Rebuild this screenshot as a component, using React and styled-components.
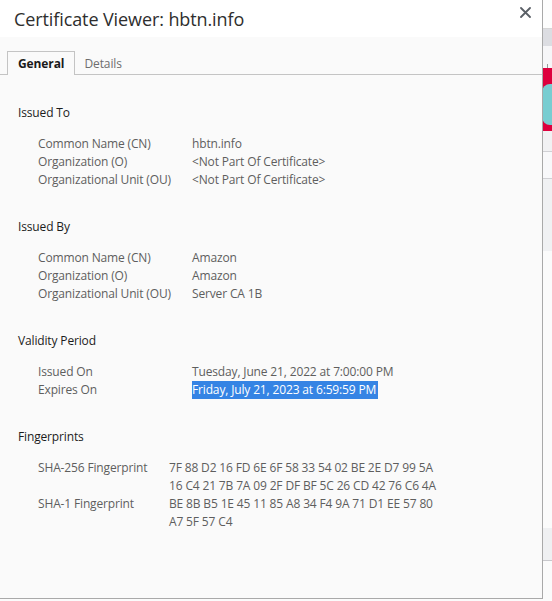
import styled, { createGlobalStyle } from "styled-components";

const GlobalStyle = createGlobalStyle`
  html, body {
    margin: 0;
    padding: 0;
    width: 552px;
    height: 601px;
    overflow: hidden;
    background: #fbfbfb;
    font-family: "Open Sans", "Noto Sans", sans-serif;
  }
`;

const Page = styled.div`
  position: relative;
  width: 552px;
  height: 601px;
  overflow: hidden;
`;

const Backdrop = styled.div`
  display: flex;
  flex-direction: column;
  height: 100%;
`;

const Band = styled.div`
  height: ${(p) => p.$h}px;
  background: ${(p) => p.$bg};
  border-bottom: ${(p) => (p.$line ? `1px solid ${p.$line}` : "none")};
  flex-shrink: 0;
`;

const Banner = styled.div`
  height: 63px;
  background: #dd003d;
  display: flex;
  align-items: flex-start;
  justify-content: flex-end;
  flex-shrink: 0;
`;

const Pill = styled.div`
  width: 10px;
  height: 41px;
  margin-top: 16px;
  background: #78cdd1;
  border-radius: 8px 0 0 8px;
`;

const Ticks = styled.div`
  height: 6px;
  background: #f6f6f8;
  background-image: repeating-linear-gradient(
    to right,
    transparent 0 2px,
    #9a9a9a 2px 3px,
    transparent 3px 5px
  );
  background-size: 100% 4px;
  background-repeat: no-repeat;
  background-position: bottom;
  flex-shrink: 0;
`;

const Dialog = styled.div`
  position: absolute;
  top: 0;
  left: 0;
  width: 542px;
  height: 598px;
  background: #fafafa;
  border-right: 1px solid #a9a9a9;
  border-bottom: 1px solid #a9a9a9;
  display: flex;
  flex-direction: column;
  color: #5e5e5e;
`;

const Header = styled.div`
  height: 37px;
  background: #ffffff;
  display: flex;
  align-items: center;
  justify-content: space-between;
  padding: 0 10px 0 14px;
  flex-shrink: 0;
`;

const Title = styled.h1`
  margin: 0;
  font-size: 18px;
  font-weight: 400;
  color: #2e2e2e;
  letter-spacing: -0.1px;
`;

const Close = styled.button`
  border: none;
  background: none;
  padding: 0;
  margin-top: -13px;
  width: 14px;
  height: 14px;
  display: flex;
  align-items: center;
  justify-content: center;
  cursor: pointer;
`;

const TabBar = styled.div`
  display: flex;
  align-items: flex-end;
  height: 37px;
  padding-left: 7px;
  border-bottom: 1px solid #c4c4c4;
  flex-shrink: 0;
`;

const Tab = styled.div`
  height: 22px;
  padding: 0 ${(p) => (p.$active ? "10px" : "8px")};
  display: flex;
  align-items: center;
  font-size: 12px;
  letter-spacing: -0.1px;
  font-weight: ${(p) => (p.$active ? 700 : 400)};
  color: ${(p) => (p.$active ? "#1a1a1a" : "#6e6e6e")};
  background: ${(p) => (p.$active ? "#fafafa" : "transparent")};
  border: 1px solid ${(p) => (p.$active ? "#c4c4c4" : "transparent")};
  border-bottom: none;
  margin-bottom: -1px;
  padding-bottom: 1px;
`;

const Body = styled.div`
  padding: 29px 0 0 18px;
  display: flex;
  flex-direction: column;
  letter-spacing: -0.15px;
`;

const Section = styled.section`
  margin-bottom: 29px;
`;

const Heading = styled.h2`
  margin: 0 0 13px;
  font-size: 12px;
  line-height: 18px;
  font-weight: 400;
  color: #1c1c1c;
`;

const Rows = styled.div`
  display: grid;
  grid-template-columns: ${(p) => p.$labelWidth}px auto;
  padding-left: 20px;
  font-size: 12px;
  line-height: 18px;
`;

const Label = styled.div`
  color: #5e5e5e;
`;

const Value = styled.div`
  color: #5e5e5e;
`;

const Selected = styled.span`
  background: #3584e4;
  color: #ffffff;
  display: inline-block;
  line-height: 18px;
  padding-right: 2px;
`;

const CloseIcon = () => (
  <svg width="11" height="11" viewBox="0 0 11 11">
    <path
      d="M1 1 L10 10 M10 1 L1 10"
      stroke="#5a5f66"
      strokeWidth="1.8"
      strokeLinecap="round"
    />
  </svg>
);

const sections = [
  {
    title: "Issued To",
    width: 154,
    rows: [
      ["Common Name (CN)", "hbtn.info"],
      ["Organization (O)", "<Not Part Of Certificate>"],
      ["Organizational Unit (OU)", "<Not Part Of Certificate>"],
    ],
  },
  {
    title: "Issued By",
    width: 154,
    rows: [
      ["Common Name (CN)", "Amazon"],
      ["Organization (O)", "Amazon"],
      ["Organizational Unit (OU)", "Server CA 1B"],
    ],
  },
  {
    title: "Validity Period",
    width: 154,
    rows: [
      ["Issued On", "Tuesday, June 21, 2022 at 7:00:00 PM"],
      ["Expires On", <Selected>Friday, July 21, 2023 at 6:59:59 PM</Selected>],
    ],
  },
  {
    title: "Fingerprints",
    width: 131,
    rows: [
      [
        "SHA-256 Fingerprint",
        <>
          7F 88 D2 16 FD 6E 6F 58 33 54 02 BE 2E D7 99 5A
          <br />
          16 C4 21 7B 7A 09 2F DF BF 5C 26 CD 42 76 C6 4A
        </>,
      ],
      [
        "SHA-1 Fingerprint",
        <>
          BE 8B B5 1E 45 11 85 A8 34 F4 9A 71 D1 EE 57 80
          <br />
          A7 5F 57 C4
        </>,
      ],
    ],
  },
];

export default function App() {
  return (
    <Page>
      <GlobalStyle />
      <Backdrop>
        <Band $h={28} $bg="#fdfdfd" $line="#d6d6d6" />
        <Band $h={17} $bg="#dcdde2" />
        <Band $h={16} $bg="#f6f6f8" />
        <Ticks />
        <Banner>
          <Pill />
        </Banner>
        <Band $h={20} $bg="#f1f1f3" $line="#d0d0d4" />
        <Band $h={26} $bg="#f8f8fa" $line="#d0d0d4" />
        <Band $h={72} $bg="#f0f1f3" />
        <Band $h={277} $bg="#fbfbfb" />
        <Band $h={32} $bg="#eff0f2" $line="#c8c8cc" />
        <Band $h={40} $bg="#fbfbfb" />
      </Backdrop>
      <Dialog>
        <Header>
          <Title>Certificate Viewer: hbtn.info</Title>
          <Close aria-label="Close">
            <CloseIcon />
          </Close>
        </Header>
        <TabBar>
          <Tab $active>General</Tab>
          <Tab>Details</Tab>
        </TabBar>
        <Body>
          {sections.map((s) => (
            <Section key={s.title}>
              <Heading>{s.title}</Heading>
              <Rows $labelWidth={s.width}>
                {s.rows.map(([label, value]) => (
                  <>
                    <Label key={label}>{label}</Label>
                    <Value key={label + "v"}>{value}</Value>
                  </>
                ))}
              </Rows>
            </Section>
          ))}
        </Body>
      </Dialog>
    </Page>
  );
}
